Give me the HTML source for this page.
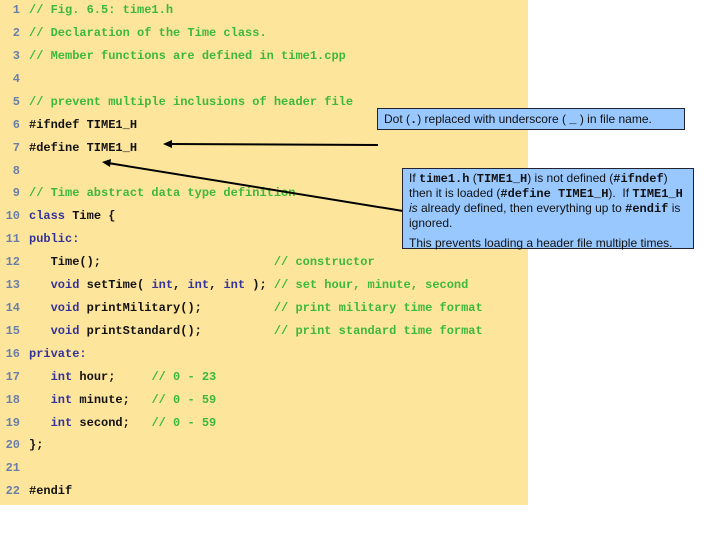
<!DOCTYPE html>
<html><head><style>
body{margin:0;width:720px;height:540px;background:#fff;position:relative;overflow:hidden}
#p{position:absolute;left:0;top:0;width:528px;height:505px;background:#fde59c}
.l{position:absolute;left:0;font:bold 12px "Liberation Mono",monospace;white-space:pre;color:#111;line-height:14px;letter-spacing:0.0px}
.n{display:inline-block;width:20px;text-align:right;color:#6a7fa8;margin-right:9px}
.c{color:#3cb83c}
.k{color:#33339a}
.b{position:absolute;background:#99c8ff;border:1px solid #223;font:12px "Liberation Sans",sans-serif;color:#111;padding:1px 6px;box-sizing:border-box}
.m{font:bold 12px "Liberation Mono",monospace}
</style></head><body>
<div id="p"></div>
<div class="l" style="top:3px"><span class="n">1</span><span class="c">// Fig. 6.5: time1.h</span></div>
<div class="l" style="top:26px"><span class="n">2</span><span class="c">// Declaration of the Time class.</span></div>
<div class="l" style="top:49px"><span class="n">3</span><span class="c">// Member functions are defined in time1.cpp</span></div>
<div class="l" style="top:72px"><span class="n">4</span></div>
<div class="l" style="top:95px"><span class="n">5</span><span class="c">// prevent multiple inclusions of header file</span></div>
<div class="l" style="top:118px"><span class="n">6</span>#ifndef TIME1_H</div>
<div class="l" style="top:141px"><span class="n">7</span>#define TIME1_H</div>
<div class="l" style="top:164px"><span class="n">8</span></div>
<div class="l" style="top:186px"><span class="n">9</span><span class="c">// Time abstract data type definition</span></div>
<div class="l" style="top:209px"><span class="n">10</span><span class="k">class</span> Time {</div>
<div class="l" style="top:232px"><span class="n">11</span><span class="k">public:</span></div>
<div class="l" style="top:255px"><span class="n">12</span>   Time();                        <span class="c">// constructor</span></div>
<div class="l" style="top:278px"><span class="n">13</span>   <span class="k">void</span> setTime( <span class="k">int</span>, <span class="k">int</span>, <span class="k">int</span> ); <span class="c">// set hour, minute, second</span></div>
<div class="l" style="top:301px"><span class="n">14</span>   <span class="k">void</span> printMilitary();          <span class="c">// print military time format</span></div>
<div class="l" style="top:324px"><span class="n">15</span>   <span class="k">void</span> printStandard();          <span class="c">// print standard time format</span></div>
<div class="l" style="top:347px"><span class="n">16</span><span class="k">private:</span></div>
<div class="l" style="top:370px"><span class="n">17</span>   <span class="k">int</span> hour;     <span class="c">// 0 - 23</span></div>
<div class="l" style="top:393px"><span class="n">18</span>   <span class="k">int</span> minute;   <span class="c">// 0 - 59</span></div>
<div class="l" style="top:416px"><span class="n">19</span>   <span class="k">int</span> second;   <span class="c">// 0 - 59</span></div>
<div class="l" style="top:438px"><span class="n">20</span>};</div>
<div class="l" style="top:461px"><span class="n">21</span></div>
<div class="l" style="top:484px"><span class="n">22</span>#endif</div>
<svg style="position:absolute;left:0;top:0" width="720" height="540">
<line x1="378" y1="145" x2="170" y2="144" stroke="#000" stroke-width="2"/>
<polygon points="163,144 172,140 172,148" fill="#000"/>
<line x1="403" y1="211" x2="108" y2="163" stroke="#000" stroke-width="2"/>
<polygon points="102,162 111,159 110,167" fill="#000"/>
</svg>
<div class="b" style="left:377px;top:108px;width:308px;height:22px;line-height:18px">Dot (<span class="m">.</span>) replaced with underscore ( <span class="m">_</span> ) in file name.</div>
<div class="b" style="left:402px;top:168px;width:292px;height:81px;line-height:14.5px;padding-top:2px">If <span class="m">time1.h</span> (<span class="m">TIME1_H</span>) is not defined (<span class="m">#ifndef</span>) then it is loaded (<span class="m">#define TIME1_H</span>).&nbsp; If <span class="m">TIME1_H</span> <i>is</i> already defined, then everything up to <span class="m">#endif</span> is ignored.<div style="margin-top:5px">This prevents loading a header file multiple times.</div></div>
</body></html>
